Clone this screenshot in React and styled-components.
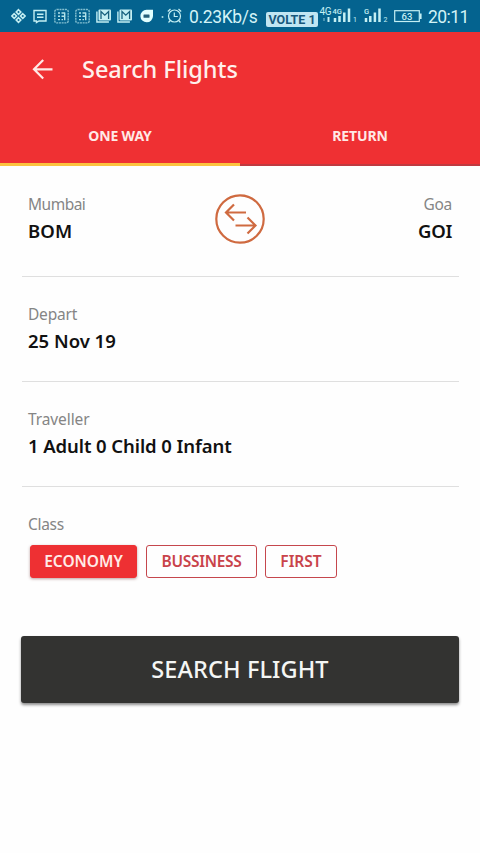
import React, { useState } from "react";
import styled, { createGlobalStyle } from "styled-components";

const GlobalStyle = createGlobalStyle`
  * {
    box-sizing: border-box;
  }

  body {
    margin: 0;
    background: #fefefe;
    font-family: "Noto Sans", "Open Sans", sans-serif;
  }

  button {
    font-family: inherit;
    padding: 0;
    cursor: pointer;
  }
`;

const Screen = styled.div`
  width: 480px;
  height: 853px;
  display: flex;
  flex-direction: column;
  background: #fefefe;
  overflow: hidden;
`;

const StatusBar = styled.div`
  height: 32px;
  flex-shrink: 0;
  display: flex;
  align-items: center;
  padding-left: 11px;
  background: #04638f;
  color: #d3f3f6;
  font-family: Roboto, sans-serif;
  white-space: nowrap;
`;

const StatusIcon = styled.svg`
  display: block;
  flex-shrink: 0;
  width: ${(props) => props.$width || 15}px;
  height: 32px;
  margin-right: ${(props) => props.$gap || 6}px;
  fill: none;
  stroke: #c4eff3;
  stroke-width: 1.4;

  text {
    fill: #c4eff3;
    stroke: none;
    font-family: Roboto, sans-serif;
  }
`;

const StatusText = styled.span`
  flex-shrink: 0;
  width: ${(props) => props.$width}px;
  margin-right: ${(props) => props.$gap || 0}px;
  padding-top: 2px;
  font-size: 17.5px;
  line-height: 20px;
  letter-spacing: ${(props) => props.$spacing || 0}px;
`;

const VolteBadge = styled.span`
  flex-shrink: 0;
  width: 52px;
  height: 15px;
  margin: 6px 1px 0 0;
  border-radius: 2px;
  background: #c0e6f3;
  color: #17587c;
  font-size: 12.5px;
  font-weight: 700;
  line-height: 15px;
  text-align: center;
`;

const Header = styled.header`
  height: 134px;
  flex-shrink: 0;
  background: #ef3033;
  color: #fff0ec;
`;

const TitleRow = styled.div`
  height: 74px;
  display: flex;
  align-items: center;
  padding-left: 32px;
`;

const BackButton = styled.button`
  width: 22px;
  height: 22px;
  margin-right: 28px;
  border: none;
  background: none;

  svg {
    display: block;
  }
`;

const Title = styled.h1`
  margin: 0;
  font-size: 23.5px;
  font-weight: 500;
  line-height: 32px;
  letter-spacing: -0.05px;
`;

const Tabs = styled.div`
  height: 60px;
  display: flex;
`;

const Tab = styled.button`
  flex: 1;
  padding-top: ${(props) => (props.$active ? 2 : 1)}px;
  border: none;
  border-bottom: ${(props) =>
    props.$active ? "3px solid #fbc33f" : "2px solid #bf3a40"};
  background: none;
  color: #ffe9e6;
  font-size: 14px;
  font-weight: 700;
  letter-spacing: -0.15px;
`;

const Form = styled.main`
  padding: 1px 21px 0 22px;
`;

const Field = styled.section`
  height: ${(props) => props.$height || 105}px;
  display: grid;
  grid-template-columns: 1fr auto 1fr;
  padding: 27px 7px 0 6px;
  border-bottom: ${(props) => (props.$last ? "none" : "1px solid #dfdfdf")};
  white-space: nowrap;
`;

const FieldText = styled.div`
  text-align: ${(props) => props.$align || "left"};
`;

const Label = styled.div`
  color: #858585;
  font-size: 15.5px;
  line-height: 20px;
  letter-spacing: ${(props) => props.$spacing || 0}px;
`;

const Value = styled.div`
  margin-top: 3px;
  color: #111;
  font-size: 18.5px;
  font-weight: 600;
  line-height: 28px;
  letter-spacing: ${(props) => props.$spacing || 0}px;
`;

const SwapButton = styled.button`
  width: 50px;
  height: 50px;
  border: none;
  background: none;

  svg {
    display: block;
  }
`;

const ClassList = styled.div`
  display: flex;
  margin: 11px 0 0 2px;
`;

const ClassButton = styled.button`
  width: ${(props) => props.$width}px;
  height: 33px;
  margin-right: ${(props) => props.$gap || 0}px;
  padding-bottom: 1px;
  border: 1.5px solid ${(props) => (props.$active ? "#ee3033" : "#c5474d")};
  border-radius: 3px;
  background: ${(props) => (props.$active ? "#ee3033" : "#fefefe")};
  color: ${(props) => (props.$active ? "#ffebe8" : "#c9434a")};
  box-shadow: ${(props) =>
    props.$active ? "0 1px 3px rgba(90, 20, 20, 0.4)" : "none"};
  font-size: 15.5px;
  font-weight: 600;
  letter-spacing: ${(props) => props.$spacing || 0}px;
`;

const SearchButton = styled.button`
  display: block;
  width: 438px;
  height: 67px;
  margin-left: -1px;
  padding-bottom: 1px;
  border: none;
  border-radius: 3px;
  background: #333331;
  color: #f4f6f4;
  box-shadow: 0 2px 3px rgba(0, 0, 0, 0.45);
  font-size: 23.5px;
  font-weight: 500;
  letter-spacing: 0.1px;
`;

const CalendarIcon = () => (
  <StatusIcon viewBox="0 0 15 32">
    <rect x="0.8" y="9.5" width="13.4" height="13.4" rx="2" opacity="0.65" strokeDasharray="2 0.7" />
    <path d="M4 13h2M7.5 13h3.5M4 16.3h2M7.5 16.3h3M4 19.6h2M7.5 19.6h1.5M10.7 12.5v7.8" opacity="0.9" />
  </StatusIcon>
);

const MailIcon = ({ gap }) => (
  <StatusIcon viewBox="0 0 15 32" $gap={gap}>
    <path d="M0.9 11.5V22h12" />
    <rect x="2.5" y="9.5" width="12.5" height="11" rx="1" fill="#c4eff3" stroke="none" />
    <path d="M5 19v-7.5l3.8 3.7 3.8-3.7V19" stroke="#17617e" strokeWidth="1.3" />
  </StatusIcon>
);

const DualSignalIcon = () => (
  <StatusIcon viewBox="0 0 38 32" $width={38} $gap={7}>
    <text x="0.5" y="15" fontSize="10" textLength="12">
      4G
    </text>
    <text x="13.5" y="13.5" fontSize="7.5" fontWeight="500">
      4G
    </text>
    <path d="M5 18v3" strokeWidth="1" opacity="0.7" />
    <path d="M9.5 17v5" strokeWidth="2" />
    <path d="M16 18v4M20.5 16v6M25.3 12.5V22M30 8.5V22" strokeWidth="2.5" />
    <text x="34" y="22" fontSize="7">
      1
    </text>
  </StatusIcon>
);

const SignalIcon = () => (
  <StatusIcon viewBox="0 0 24 32" $width={24} $gap={6}>
    <text x="0" y="13.5" fontSize="7.5" fontWeight="500">
      G
    </text>
    <path d="M2 18v4M6.3 16v6M10.9 12.5V22M15.5 8.5V22" strokeWidth="2.5" />
    <text x="19.5" y="22" fontSize="7">
      2
    </text>
  </StatusIcon>
);

const PhoneStatus = () => (
  <StatusBar>
    <StatusIcon viewBox="0 0 15 32" $gap={7}>
      <path
        d="M7.5 9.7l2.3 2.3-2.3 2.3-2.3-2.3zM7.5 17.7l2.3 2.3-2.3 2.3-2.3-2.3zM3.2 13.7L5.5 16l-2.3 2.3L.9 16zM11.8 13.7l2.3 2.3-2.3 2.3L9.5 16z"
        strokeWidth="1.6"
      />
    </StatusIcon>
    <StatusIcon viewBox="0 0 15 32">
      <path d="M1 10.5h12V21H6l-2.5 1.5V21H1zM4 14.2h6.5M4 17.2h6.5" />
    </StatusIcon>
    <CalendarIcon />
    <CalendarIcon />
    <MailIcon />
    <MailIcon gap={8} />
    <StatusIcon viewBox="0 0 14 32" $width={14} $gap={7}>
      <path d="M6.5 9.7H13V16a6.3 6.3 0 1 1-6.5-6.3z" fill="#e1ffff" stroke="none" />
      <rect x="3.5" y="14.5" width="6" height="3.3" rx="0.5" fill="#24617a" stroke="none" />
    </StatusIcon>
    <StatusIcon viewBox="0 0 21 32" $width={21} $gap={7}>
      <circle cx="1.5" cy="17" r="1" fill="#a4d9e0" stroke="none" />
      <circle cx="13.5" cy="16" r="6" strokeWidth="1.2" />
      <path d="M13.3 12.5v4h3.5M6.8 11.5L9.5 9M20.2 11.5L17.5 9M9.3 20.5l-1.8 2M17.7 20.5l1.8 2" strokeWidth="1.2" />
    </StatusIcon>
    <StatusText $width={70} $gap={7} $spacing={-0.35}>
      0.23Kb/s
    </StatusText>
    <VolteBadge>VOLTE 1</VolteBadge>
    <DualSignalIcon />
    <SignalIcon />
    <StatusIcon viewBox="0 0 28 32" $width={28} $gap={6}>
      <rect x="0.7" y="10.7" width="24.6" height="10.8" strokeWidth="1.2" />
      <path d="M26.8 13.5v5.5" strokeWidth="1.6" />
      <text x="13" y="19.5" fontSize="9.5" fontWeight="500" textAnchor="middle">
        63
      </text>
    </StatusIcon>
    <StatusText $width={44} $spacing={-0.55}>
      20:11
    </StatusText>
  </StatusBar>
);

const classes = [
  { name: "ECONOMY", width: 107, gap: 9 },
  { name: "BUSSINESS", width: 111, gap: 8, spacing: -0.3 },
  { name: "FIRST", width: 72 },
];

const App = () => {
  const [tab, setTab] = useState("ONE WAY");
  const [travelClass, setTravelClass] = useState("ECONOMY");

  return (
    <Screen>
      <GlobalStyle />
      <PhoneStatus />
      <Header>
        <TitleRow>
          <BackButton aria-label="Back">
            <svg width="22" height="22" viewBox="0 0 22 22" fill="none" stroke="#ffe9e6" strokeWidth="2.2">
              <path d="M20.5 11.3H2.5M11.2 2L2 11.3l9.2 9.2" />
            </svg>
          </BackButton>
          <Title>Search Flights</Title>
        </TitleRow>
        <Tabs>
          {["ONE WAY", "RETURN"].map((name) => (
            <Tab key={name} $active={tab === name} onClick={() => setTab(name)}>
              {name}
            </Tab>
          ))}
        </Tabs>
      </Header>
      <Form>
        <Field $height={110}>
          <FieldText>
            <Label $spacing={-0.5}>Mumbai</Label>
            <Value $spacing={0.1}>BOM</Value>
          </FieldText>
          <SwapButton aria-label="Swap cities">
            <svg width="50" height="50" viewBox="0 0 50 50" fill="none" stroke="#cf6a40" strokeWidth="2.2">
              <circle cx="25" cy="25" r="23.7" />
              <path d="M31 18.5H11M19 10.5l-8 8 8 8M20.5 31.5h20M32.5 23.5l8 8-8 8" />
            </svg>
          </SwapButton>
          <FieldText $align="right">
            <Label $spacing={-0.3}>Goa</Label>
            <Value $spacing={-0.3}>GOI</Value>
          </FieldText>
        </Field>
        <Field>
          <FieldText>
            <Label $spacing={-0.2}>Depart</Label>
            <Value>25 Nov 19</Value>
          </FieldText>
        </Field>
        <Field>
          <FieldText>
            <Label $spacing={-0.1}>Traveller</Label>
            <Value $spacing={-0.08}>1 Adult 0 Child 0 Infant</Value>
          </FieldText>
        </Field>
        <Field $height={149} $last>
          <FieldText>
            <Label $spacing={-0.3}>Class</Label>
            <ClassList>
              {classes.map(({ name, width, gap, spacing }) => (
                <ClassButton
                  key={name}
                  $width={width}
                  $gap={gap}
                  $spacing={spacing}
                  $active={travelClass === name}
                  onClick={() => setTravelClass(name)}
                >
                  {name}
                </ClassButton>
              ))}
            </ClassList>
          </FieldText>
        </Field>
        <SearchButton>SEARCH FLIGHT</SearchButton>
      </Form>
    </Screen>
  );
};

export default App;
